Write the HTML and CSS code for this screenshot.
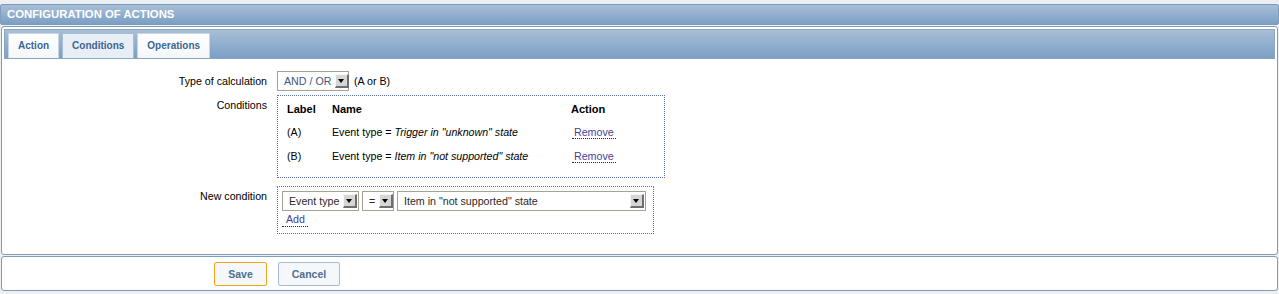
FILE: index.html
```html
<!DOCTYPE html>
<html>
<head>
<meta charset="utf-8">
<link rel="stylesheet" href="styles.css">
</head>
<body>
<div class="topstrip"></div>
<div class="header">CONFIGURATION OF ACTIONS</div>
<div class="mainbox">
  <div class="tabbar">
    <span class="tab">Action</span>
    <span class="tab active">Conditions</span>
    <span class="tab">Operations</span>
  </div>
  <div class="form">
    <div class="row r1">
      <div class="label">Type of calculation</div>
      <div class="value inline">
        <span class="select calc"><span class="seltext">AND / OR</span><span class="drop"></span></span>
        <span class="hint">(A or B)</span>
      </div>
    </div>
    <div class="row r2">
      <div class="label">Conditions</div>
      <div class="value">
        <div class="dotbox conds">
          <table class="ctable">
            <tr><th class="c1">Label</th><th class="c2">Name</th><th class="c3">Action</th></tr>
            <tr><td>(A)</td><td>Event type = <i>Trigger in "unknown" state</i></td><td><span class="link">Remove</span></td></tr>
            <tr><td>(B)</td><td>Event type = <i>Item in "not supported" state</i></td><td><span class="link">Remove</span></td></tr>
          </table>
        </div>
      </div>
    </div>
    <div class="row r3">
      <div class="label">New condition</div>
      <div class="value">
        <div class="dotbox newcond">
          <div class="selrow">
            <span class="select s1"><span class="seltext">Event type</span><span class="drop"></span></span>
            <span class="select s2"><span class="seltext">=</span><span class="drop"></span></span>
            <span class="select s3"><span class="seltext">Item in "not supported" state</span><span class="drop"></span></span>
          </div>
          <span class="link add">Add</span>
        </div>
      </div>
    </div>
  </div>
</div>
<div class="footer">
  <span class="btn save">Save</span>
  <span class="btn cancel">Cancel</span>
</div>
</body>
</html>
```
FILE: styles.css
```css
html, body {
  margin: 0;
  padding: 0;
}
body {
  background: #ecf0f3;
  font-family: "Liberation Sans", Arial, sans-serif;
  font-size: 10.67px;
  color: #000;
  width: 1279px;
  height: 294px;
  overflow: hidden;
}
.topstrip {
  height: 4px;
}
.header {
  height: 19px;
  line-height: 19px;
  border: 1px solid #7f9cbb;
  border-radius: 2px;
  background: linear-gradient(#a8bfd7, #7b9fc4);
  color: #fff;
  font-family: "Liberation Sans", Arial, sans-serif;
  font-weight: bold;
  font-size: 11.33px;
  padding-left: 6px;
  margin-bottom: 1px;
}
.mainbox {
  margin: 0 1px;
  border: 1px solid #7f9cbb;
  border-radius: 3px;
  background: #fff;
  padding: 2px 2px 0;
  height: 225px;
}
.tabbar {
  height: 25px;
  border: 1px solid #8aa6c4;
  background: linear-gradient(#a8bfd7, #7b9fc4);
  padding: 3px 0 0 3px;
  display: flex;
  gap: 3px;
  align-items: flex-end;
}
.tab {
  height: 24px;
  line-height: 24px;
  padding: 0 9px;
  border: 1px solid #c8d6e4;
  border-bottom: none;
  background: linear-gradient(#ffffff, #f4f7fa);
  color: #3b6593;
  font-weight: bold;
  font-size: 10px;
}
.tab.active {
  background: #e8eef5;
  border-color: #a9bdd2;
}
.form {
  padding-top: 12px;
}
.row {
  display: grid;
  grid-template-columns: 263px 1fr;
  column-gap: 10px;
}
.label {
  text-align: right;
  color: #000;
}
.r1 .label { padding-top: 4px; }
.r2 { margin-top: 4px; }
.r2 .label { padding-top: 4px; }
.r3 { margin-top: 8px; }
.r3 .label { padding-top: 4px; }
.inline {
  display: flex;
  align-items: center;
  gap: 5px;
}
.select {
  display: inline-flex;
  align-items: center;
  justify-content: space-between;
  height: 18px;
  border: 1px solid #a5a295;
  background: #fff;
  color: #2a2a2a;
  box-sizing: content-box;
  padding: 0 1px 0 6px;
}
.seltext {
  white-space: nowrap;
}
.drop {
  width: 11px;
  height: 11px;
  margin-left: 4px;
  background: #d6d6d6;
  border-top: 1px solid #f6f6f6;
  border-left: 1px solid #f6f6f6;
  border-right: 2px solid #6e6e6e;
  border-bottom: 2px solid #6e6e6e;
  position: relative;
  flex: none;
}
.drop::after {
  content: "";
  position: absolute;
  left: 2px;
  top: 4px;
  border-left: 3.5px solid transparent;
  border-right: 3.5px solid transparent;
  border-top: 4px solid #000;
}
.calc {
  width: 63px;
  color: #44557a;
}
.hint { color: #000; }
.dotbox {
  border: 1px dotted #5b6fa8;
  box-sizing: border-box;
}
.conds {
  width: 388px;
  height: 83px;
  padding: 4px 9px 0;
}
.ctable {
  border-collapse: collapse;
}
.ctable th {
  text-align: left;
  font-weight: bold;
  font-size: 11px;
  height: 18px;
  padding: 0;
}
.ctable td {
  height: 24px;
  padding: 0;
  vertical-align: middle;
}
.ctable .c1 { width: 45px; }
.ctable .c2 { width: 239px; }
.ctable tr:nth-child(2) td { padding-top: 2px; }
.link {
  color: #3f3f9c;
  border-bottom: 1px dotted #1c1c8c;
  padding: 0 2px 0 2px;
}
.ctable .link {
  margin-left: 1px;
}
.newcond {
  width: 377px;
  height: 48px;
  padding: 4px 7px 0 4px;
}
.selrow {
  display: flex;
  gap: 3px;
}
.s1 { width: 68px; }
.s2 { width: 23px; }
.s3 { width: 240px; }
.add {
  display: inline-block;
  margin-top: 2px;
  padding: 0 3px 0 4px;
  line-height: 13px;
}
.footer {
  margin: 1px 1px 0;
  border: 1px solid #7f9cbb;
  border-radius: 3px;
  background: #fff;
  height: 28px;
  display: flex;
  align-items: flex-start;
  padding: 5px 0 0 212px;
  gap: 11px;
}
.btn {
  height: 22px;
  line-height: 22px;
  border: 1px solid #a7bbd3;
  border-radius: 2px;
  background: #f5f8fb;
  color: #4e6e92;
  font-weight: bold;
  font-size: 10.5px;
  text-align: center;
}
.save {
  width: 51px;
  border-color: #f7a41d;
}
.cancel {
  width: 60px;
}
```
